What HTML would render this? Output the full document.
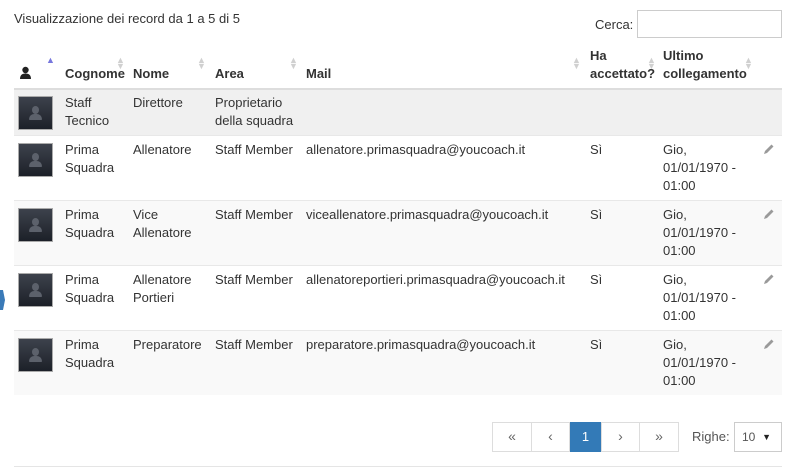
<!DOCTYPE html><html><head><style>
body{margin:0;width:800px;height:473px;background:#fff;font-family:"Liberation Sans",sans-serif;font-size:13px;color:#333;position:relative;overflow:hidden}
.a{position:absolute;line-height:18px;white-space:nowrap}
.row{position:absolute;left:14px;width:768px;border-top:1px solid #e8e8e8}
.av{position:absolute;left:18px;width:35px;height:34px;background:linear-gradient(#3d424c,#1c2028);border:1px solid #aaa;box-sizing:border-box}
.av:before{content:"";position:absolute;left:13px;top:9px;width:7px;height:8px;border-radius:50%;background:#5c616b}
.av:after{content:"";position:absolute;left:10px;top:17px;width:13px;height:6px;border-radius:6px 6px 1px 1px;background:#5c616b}
.s{position:absolute;color:#d0d0d0;font-size:9px;line-height:6px}
.p{position:absolute;left:762px}
.b{position:absolute;top:422px;height:30px;border:1px solid #ddd;box-sizing:border-box;text-align:center;line-height:27px;color:#666;font-size:14px}
</style></head><body>
<div class="a" style="left:14px;top:10px">Visualizzazione dei record da 1 a 5 di 5</div>
<div class="a" style="left:595px;top:16px">Cerca:</div>
<div style="position:absolute;left:637px;top:10px;width:145px;height:28px;border:1px solid #ccc;box-sizing:border-box"></div>
<svg style="position:absolute;left:19px;top:66px" width="13" height="13" viewBox="0 0 13 13"><circle cx="6.5" cy="4" r="3.2" fill="#222"/><path d="M1 13 Q1 7.5 6.5 7.5 Q12 7.5 12 13Z" fill="#222"/></svg>
<div class="s" style="left:46px;top:57px;color:#77d">▲</div>
<div class="a" style="left:65px;top:65px;font-weight:bold">Cognome</div>
<div class="s" style="left:116px;top:57px">▲<br>▼</div>
<div class="a" style="left:133px;top:65px;font-weight:bold">Nome</div>
<div class="s" style="left:197px;top:57px">▲<br>▼</div>
<div class="a" style="left:215px;top:65px;font-weight:bold">Area</div>
<div class="s" style="left:289px;top:57px">▲<br>▼</div>
<div class="a" style="left:306px;top:65px;font-weight:bold">Mail</div>
<div class="s" style="left:572px;top:57px">▲<br>▼</div>
<div class="a" style="left:590px;top:47px;font-weight:bold">Ha<br>accettato?</div>
<div class="s" style="left:647px;top:57px">▲<br>▼</div>
<div class="a" style="left:663px;top:47px;font-weight:bold">Ultimo<br>collegamento</div>
<div class="s" style="left:744px;top:57px">▲<br>▼</div>

<div class="row" style="top:88px;height:46px;background:#f0f0f0;border-top:2px solid #ddd"></div>
<div class="av" style="top:96px"></div>
<div class="a" style="left:65px;top:94px">Staff<br>Tecnico</div>
<div class="a" style="left:133px;top:94px">Direttore</div>
<div class="a" style="left:215px;top:94px">Proprietario<br>della squadra</div>

<div class="row" style="top:135px;height:64px"></div>
<div class="av" style="top:143px"></div>
<div class="a" style="left:65px;top:141px">Prima<br>Squadra</div>
<div class="a" style="left:133px;top:141px">Allenatore</div>
<div class="a" style="left:215px;top:141px">Staff Member</div>
<div class="a" style="left:306px;top:141px">allenatore.primasquadra@youcoach.it</div>
<div class="a" style="left:590px;top:141px">Sì</div>
<div class="a" style="left:663px;top:141px">Gio,<br>01/01/1970 -<br>01:00</div>
<svg class="p" style="top:143px" width="13" height="13" viewBox="0 0 13 13"><path d="M2 11 L3 8 L9.5 1.5 L11.5 3.5 L5 10Z" fill="#9a9a9a"/></svg>

<div class="row" style="top:200px;height:64px;background:#f9f9f9"></div>
<div class="av" style="top:208px"></div>
<div class="a" style="left:65px;top:206px">Prima<br>Squadra</div>
<div class="a" style="left:133px;top:206px">Vice<br>Allenatore</div>
<div class="a" style="left:215px;top:206px">Staff Member</div>
<div class="a" style="left:306px;top:206px">viceallenatore.primasquadra@youcoach.it</div>
<div class="a" style="left:590px;top:206px">Sì</div>
<div class="a" style="left:663px;top:206px">Gio,<br>01/01/1970 -<br>01:00</div>
<svg class="p" style="top:208px" width="13" height="13" viewBox="0 0 13 13"><path d="M2 11 L3 8 L9.5 1.5 L11.5 3.5 L5 10Z" fill="#9a9a9a"/></svg>

<div class="row" style="top:265px;height:64px"></div>
<div class="av" style="top:273px"></div>
<div class="a" style="left:65px;top:271px">Prima<br>Squadra</div>
<div class="a" style="left:133px;top:271px">Allenatore<br>Portieri</div>
<div class="a" style="left:215px;top:271px">Staff Member</div>
<div class="a" style="left:306px;top:271px">allenatoreportieri.primasquadra@youcoach.it</div>
<div class="a" style="left:590px;top:271px">Sì</div>
<div class="a" style="left:663px;top:271px">Gio,<br>01/01/1970 -<br>01:00</div>
<svg class="p" style="top:273px" width="13" height="13" viewBox="0 0 13 13"><path d="M2 11 L3 8 L9.5 1.5 L11.5 3.5 L5 10Z" fill="#9a9a9a"/></svg>
<div style="position:absolute;left:0;top:290px;width:5px;height:20px;background:#3a7ab8;clip-path:polygon(0 0,60% 0,100% 50%,60% 100%,0 100%)"></div>

<div class="row" style="top:330px;height:64px;background:#f9f9f9"></div>
<div class="av" style="top:338px"></div>
<div class="a" style="left:65px;top:336px">Prima<br>Squadra</div>
<div class="a" style="left:133px;top:336px">Preparatore</div>
<div class="a" style="left:215px;top:336px">Staff Member</div>
<div class="a" style="left:306px;top:336px">preparatore.primasquadra@youcoach.it</div>
<div class="a" style="left:590px;top:336px">Sì</div>
<div class="a" style="left:663px;top:336px">Gio,<br>01/01/1970 -<br>01:00</div>
<svg class="p" style="top:338px" width="13" height="13" viewBox="0 0 13 13"><path d="M2 11 L3 8 L9.5 1.5 L11.5 3.5 L5 10Z" fill="#9a9a9a"/></svg>

<div class="b" style="left:492px;width:40px">«</div>
<div class="b" style="left:531px;width:39px">‹</div>
<div class="b" style="left:570px;width:31px;background:#337ab7;border-color:#337ab7;color:#fff;font-size:13px">1</div>
<div class="b" style="left:601px;width:39px">›</div>
<div class="b" style="left:639px;width:40px">»</div>
<div class="a" style="left:692px;top:428px;color:#555">Righe:</div>
<div style="position:absolute;left:734px;top:422px;width:48px;height:30px;border:1px solid #ccc;box-sizing:border-box;font-size:12px;line-height:28px;padding-left:7px;color:#555">10<span style="position:absolute;right:10px;top:0;font-size:9px;color:#222">▼</span></div>
<div style="position:absolute;left:14px;top:466px;width:768px;border-top:1px solid #e5e5e5"></div>
</body></html>
